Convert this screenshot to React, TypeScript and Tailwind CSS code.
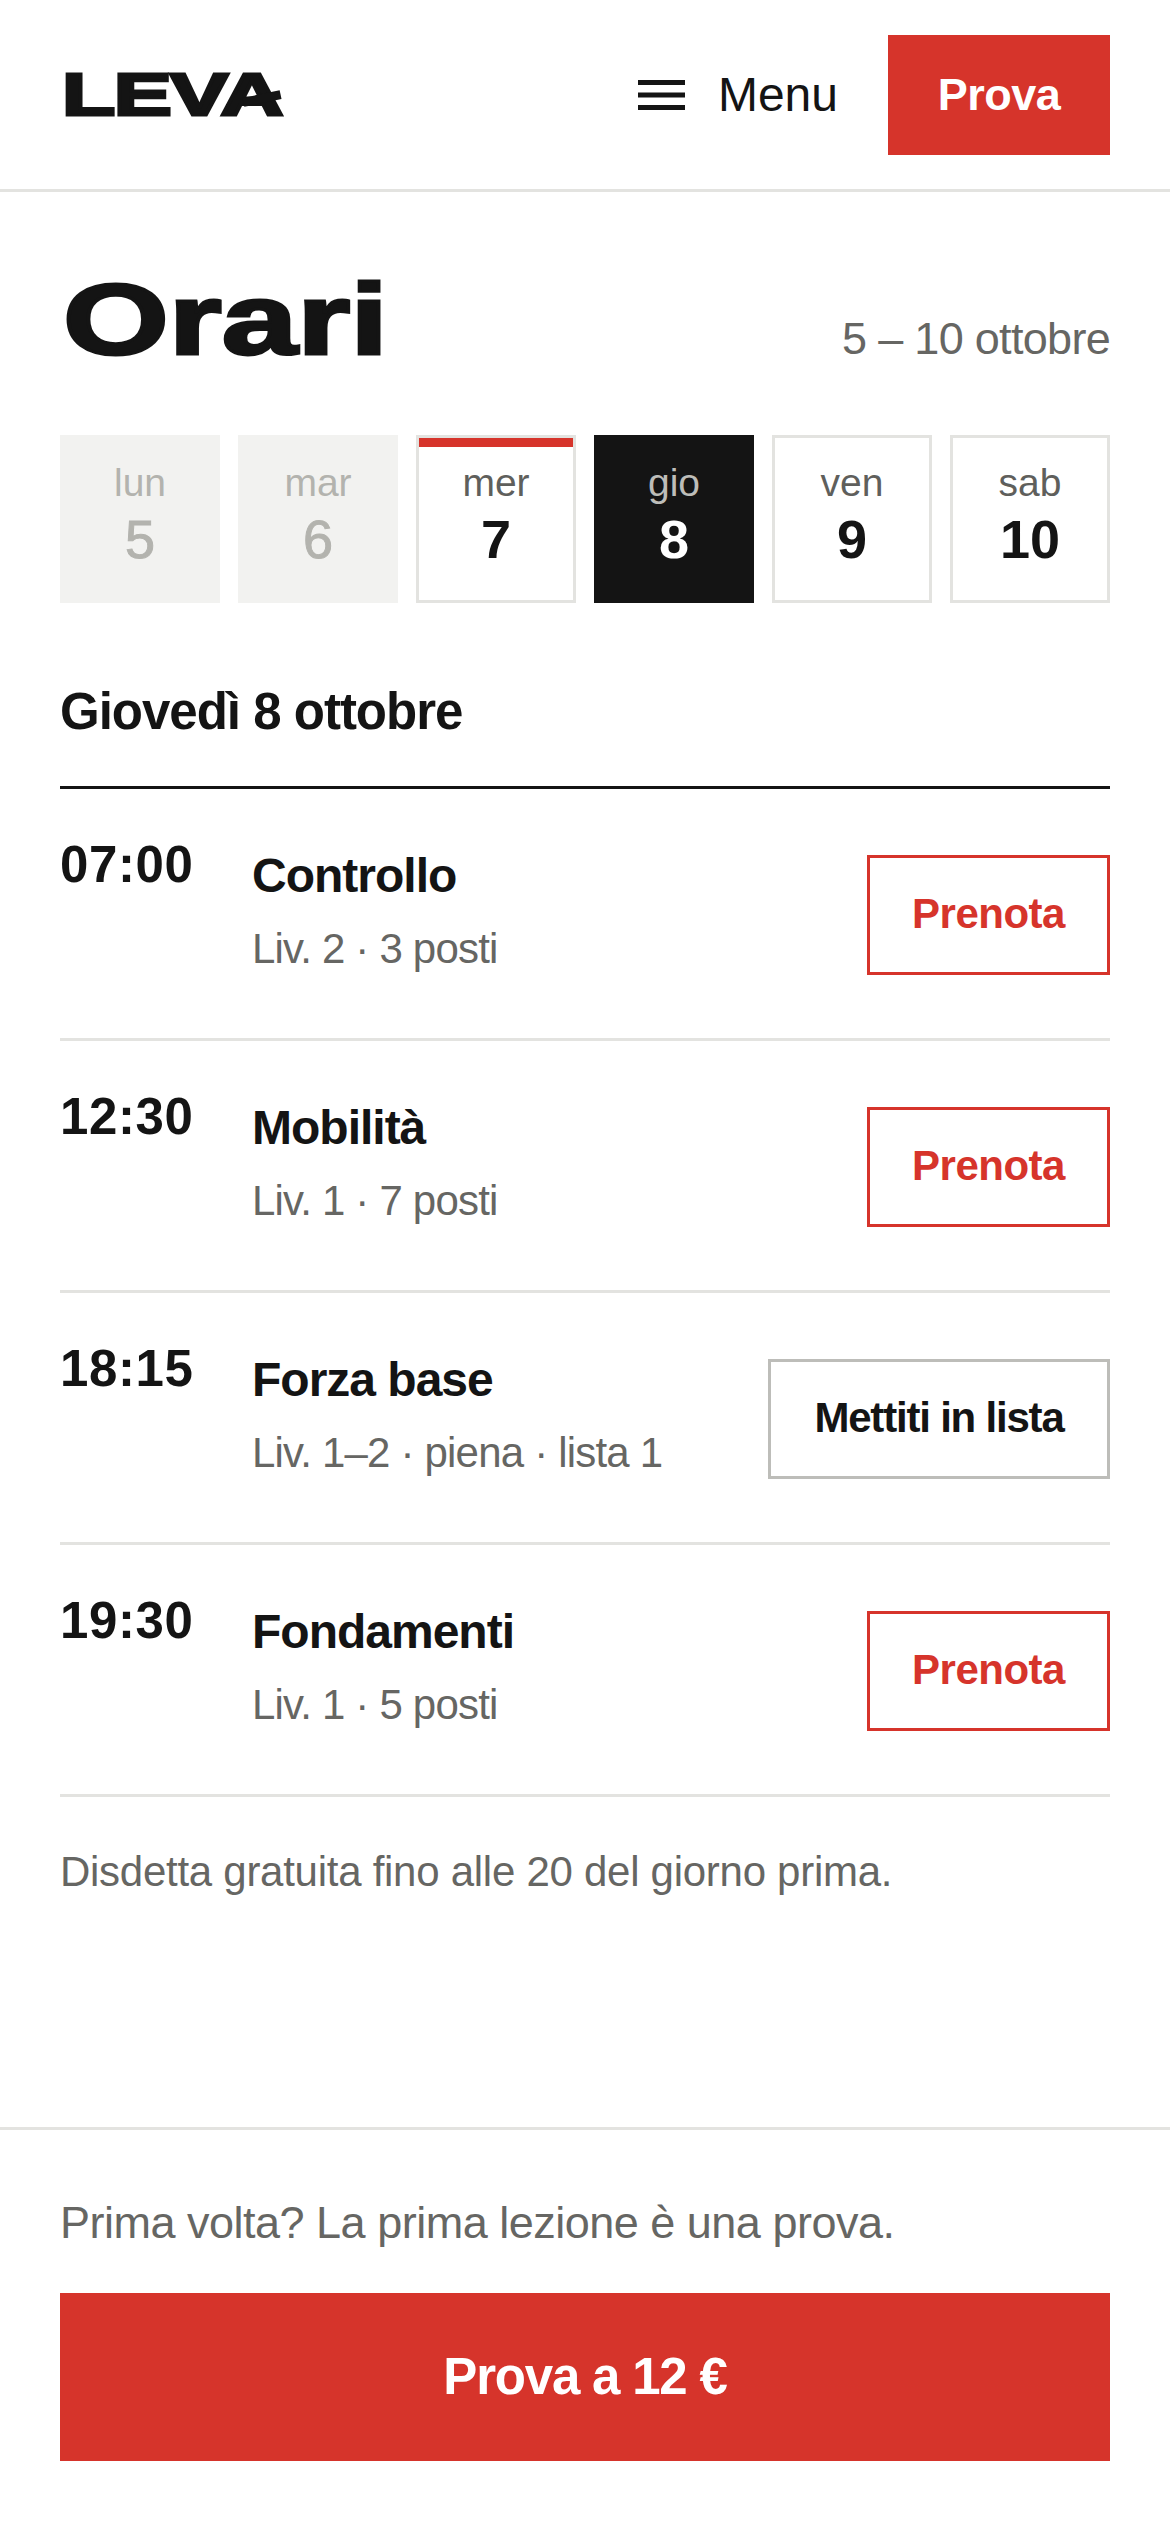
const ink = "text-[#141414]";

const days = [
  { label: "lun", num: "5", state: "past" },
  { label: "mar", num: "6", state: "past" },
  { label: "mer", num: "7", state: "today" },
  { label: "gio", num: "8", state: "active" },
  { label: "ven", num: "9", state: "open" },
  { label: "sab", num: "10", state: "open" },
];

const classes = [
  { time: "07:00", name: "Controllo", info: "Liv. 2 · 3 posti", full: false },
  { time: "12:30", name: "Mobilità", info: "Liv. 1 · 7 posti", full: false },
  { time: "18:15", name: "Forza base", info: "Liv. 1–2 · piena · lista 1", full: true },
  { time: "19:30", name: "Fondamenti", info: "Liv. 1 · 5 posti", full: false },
];

function DayTile({ label, num, state }: { label: string; num: string; state: string }) {
  const box =
    state === "past"
      ? "bg-[#f2f2f0] border-[#f2f2f0]"
      : state === "active"
        ? "bg-[#141414] border-[#141414]"
        : "bg-white border-[#e3e3e0]";
  const labelColor =
    state === "past" ? "text-[#b3b3ae]" : state === "active" ? "text-[#bdbdb9]" : "text-[#5f5f5c]";
  const numColor =
    state === "past"
      ? "text-[#b3b3ae] font-normal [-webkit-text-stroke:1px_#b3b3ae]"
      : state === "active"
        ? "text-white font-bold"
        : `${ink} font-bold`;

  return (
    <div className={`relative flex h-[168px] flex-col items-center border-[3px] pt-[21px] ${box}`}>
      {state === "today" && <div className="absolute inset-x-0 top-0 h-[9px] bg-[#d6342b]" />}
      <span className={`text-[39px] leading-[48px] ${labelColor}`}>{label}</span>
      <span className={`mt-[2px] text-[54px] leading-[60px] ${numColor}`}>{num}</span>
    </div>
  );
}

function ClassRow({ time, name, info, full }: { time: string; name: string; info: string; full: boolean }) {
  return (
    <div className="flex h-[252px] items-start border-b-[3px] border-[#e3e3e0] pt-[46px]">
      <div className={`w-[192px] shrink-0 text-[51px] leading-[60px] font-bold tracking-[0.6px] ${ink}`}>{time}</div>
      <div className="flex-1 pt-[11px]">
        <div className={`text-[48px] leading-[60px] font-bold tracking-[-1px] ${ink}`}>{name}</div>
        <div className="mt-[16px] text-[42px] leading-[54px] tracking-[-0.8px] text-[#666663]">{info}</div>
      </div>
      <button
        className={`mt-[20px] flex h-[120px] items-center justify-center border-[3px] bg-white pb-[3px] text-[42px] font-bold ${
          full
            ? `w-[342px] border-[#bdbdb9] tracking-[-1.2px] ${ink}`
            : "w-[243px] border-[#d6342b] tracking-[-0.5px] text-[#d6342b]"
        }`}
      >
        {full ? "Mettiti in lista" : "Prenota"}
      </button>
    </div>
  );
}

export default function App() {
  return (
    <div className="min-h-[2532px] bg-white font-['Liberation_Sans',Arial,sans-serif]">
      {/* Header */}
      <header className="flex h-[192px] items-center justify-between border-b-[3px] border-[#e3e3e0] pl-[62px] pr-[60px]">
        <div className={`relative h-[50px] w-[219px] ${ink}`}>
          <span className="absolute left-0 top-0 origin-left scale-x-[1.45] text-[60px] leading-[50px] font-black tracking-[-1px] [-webkit-text-stroke:3px_#141414]">
            LEVA
          </span>
          <span className="absolute right-0 top-[24px] h-[9px] w-[38px] -rotate-12 bg-[#141414]" />
        </div>
        <div className="flex items-center">
          <svg width="47" height="30" viewBox="0 0 47 30" className={ink}>
            <rect x="0" y="0" width="47" height="5" fill="currentColor" />
            <rect x="0" y="12.5" width="47" height="5" fill="currentColor" />
            <rect x="0" y="25" width="47" height="5" fill="currentColor" />
          </svg>
          <span className={`ml-[33px] text-[48px] ${ink}`}>Menu</span>
          <button className="ml-[50px] flex h-[120px] w-[222px] items-center justify-center bg-[#d6342b] text-[45px] font-bold tracking-[-0.5px] text-white">
            Prova
          </button>
        </div>
      </header>

      <main className="px-[60px]">
        {/* Title */}
        <div className="flex h-[243px] items-end justify-between pb-[56px]">
          <h1 className={`ml-[3px] origin-left scale-x-[1.36] text-[100px] leading-[120px] font-black [-webkit-text-stroke:3px_#141414] ${ink}`}>
            Orari
          </h1>
          <span className="mb-[13px] text-[45px] leading-[54px] tracking-[-0.7px] text-[#666663]">5 – 10 ottobre</span>
        </div>

        {/* Week strip */}
        <div className="grid grid-cols-6 gap-[18px]">
          {days.map((d) => (
            <DayTile key={d.label} {...d} />
          ))}
        </div>

        {/* Day heading */}
        <div className={`mt-[60px] flex h-[126px] items-start border-b-[3px] border-[#141414] pt-[19px] text-[51px] leading-[60px] font-bold tracking-[-1px] ${ink}`}>
          Giovedì 8 ottobre
        </div>

        {classes.map((c) => (
          <ClassRow key={c.time} {...c} />
        ))}

        <p className="mt-[48px] text-[42px] leading-[54px] tracking-[-0.27px] text-[#666663]">
          Disdetta gratuita fino alle 20 del giorno prima.
        </p>
      </main>

      {/* Trial footer */}
      <footer className="mt-[228px] border-t-[3px] border-[#e3e3e0] px-[60px] pt-[66px]">
        <p className="text-[45px] leading-[54px] tracking-[-0.5px] text-[#666663]">
          Prima volta? La prima lezione è una prova.
        </p>
        <button className="mt-[43px] flex h-[168px] w-full items-center justify-center bg-[#d6342b] text-[51px] font-bold tracking-[-1.2px] text-white">
          Prova a 12 €
        </button>
      </footer>
    </div>
  );
}
